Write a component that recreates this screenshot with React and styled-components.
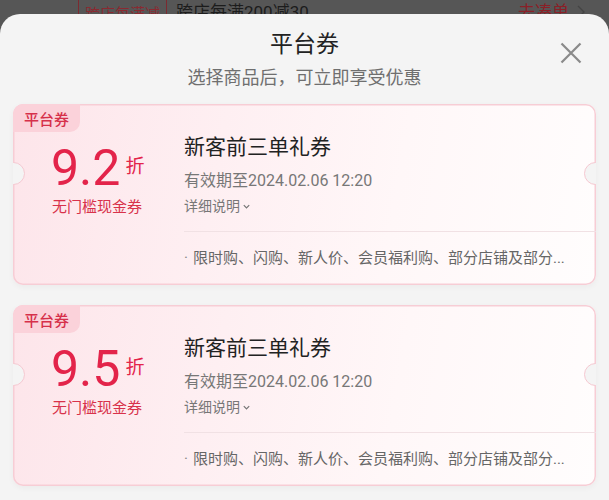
import React from "react";
import styled, { createGlobalStyle } from "styled-components";

const Global = createGlobalStyle`
  html, body { margin: 0; padding: 0; }
  body {
    font-family: Roboto, "Noto Sans CJK SC", sans-serif;
    background: #565656;
  }
`;

const Page = styled.div`
  width: 609px;
  height: 500px;
  overflow: hidden;
  background: #565656;
  display: flex;
  flex-direction: column;
`;

const BehindBar = styled.div`
  height: 14px;
  flex: none;
  overflow: hidden;
  display: flex;
  align-items: flex-start;
  padding: 0 24px 0 78px;
`;

const PromoBadge = styled.span`
  border: 1px solid #7c2a30;
  color: #8a2a31;
  font-size: 15px;
  line-height: 24px;
  padding: 2px 6px 0;
  margin-top: -1px;
`;

const PromoText = styled.span`
  margin-left: 9px;
  color: #1c1c1c;
  font-size: 17px;
  line-height: 22px;
  padding-top: 1px;
`;

const PromoLink = styled.span`
  margin-left: auto;
  color: #8a1f27;
  font-size: 17px;
  line-height: 22px;
  padding-top: 1px;
  display: flex;
  align-items: center;
  gap: 8px;
`;

const Sheet = styled.div`
  flex: 1;
  background: #f4f4f4;
  border-radius: 20px 20px 0 0;
  padding: 0 13px;
  display: flex;
  flex-direction: column;
`;

const Header = styled.div`
  position: relative;
  display: flex;
  flex-direction: column;
  align-items: center;
  padding: 16px 0 14px;
`;

const Title = styled.div`
  font-size: 23px;
  line-height: 30px;
  color: #222;
`;

const Subtitle = styled.div`
  margin-top: 6px;
  font-size: 18px;
  line-height: 24px;
  color: #6f6f6f;
`;

const CloseButton = styled.button`
  position: absolute;
  right: 13px;
  top: 27px;
  width: 24px;
  height: 24px;
  padding: 0;
  border: none;
  background: none;
  display: flex;
  align-items: center;
  justify-content: center;
`;

const List = styled.div`
  display: flex;
  flex-direction: column;
  gap: 20px;
`;

const Card = styled.div`
  position: relative;
  height: 181px;
  border-radius: 10px;
  overflow: hidden;
  display: grid;
  grid-template-columns: 171px 1fr;
  background: linear-gradient(100deg, #fde5ea 0%, #feeff2 35%, #fff7f8 65%, #fffdfd 100%);
  box-shadow: inset 0 0 0 1.5px #f7cdd5, 0 2px 6px rgba(0, 0, 0, 0.04);
`;

const Notch = styled.span`
  position: absolute;
  top: 58px;
  ${(p) => (p.$side === "left" ? "left: -11px;" : "right: -11px;")}
  width: 23px;
  height: 23px;
  box-sizing: border-box;
  border-radius: 50%;
  background: #f4f4f4;
  border: 1.5px solid #f5c8d1;
`;

const Tag = styled.span`
  position: absolute;
  left: 0;
  top: 0;
  width: 67px;
  height: 28px;
  display: flex;
  align-items: center;
  justify-content: center;
  background: #fbd2da;
  color: #d6304a;
  font-size: 15px;
  font-weight: 500;
  border-radius: 10px 0 10px 0;
`;

const Left = styled.div`
  display: flex;
  flex-direction: column;
  padding: 39px 0 0 38px;
`;

const Amount = styled.div`
  display: flex;
  align-items: flex-start;
  color: #e3244a;
`;

const Number = styled.span`
  font-family: Roboto, sans-serif;
  font-size: 50px;
  line-height: 50px;
`;

const Unit = styled.span`
  font-size: 19px;
  line-height: 22px;
  margin: 13px 0 0 5px;
`;

const AmountLabel = styled.div`
  margin-top: 4px;
  margin-left: 1px;
  font-size: 15px;
  line-height: 20px;
  color: #d8324b;
`;

const Right = styled.div`
  display: flex;
  flex-direction: column;
  padding-top: 30px;
  min-width: 0;
`;

const CouponName = styled.div`
  font-size: 21px;
  line-height: 26px;
  color: #222;
`;

const Validity = styled.div`
  margin-top: 11px;
  font-size: 16px;
  line-height: 20px;
  color: #777;
`;

const Details = styled.div`
  margin-top: 5px;
  font-size: 14px;
  line-height: 20px;
  color: #777;
  display: flex;
  align-items: center;
  gap: 2px;
`;

const Divider = styled.div`
  margin-top: 15px;
  height: 1px;
  background: #f1e1e4;
`;

const Rule = styled.div`
  margin-top: 16px;
  padding-right: 14px;
  font-size: 15px;
  line-height: 20px;
  color: #666;
  white-space: nowrap;
  overflow: hidden;
  display: flex;
  gap: 5px;
`;

const Dot = styled.span`
  color: #888;
`;

const Chevron = () => (
  <svg width="9" height="9" viewBox="0 0 10 10">
    <path d="M2 3.5 L5 6.5 L8 3.5" fill="none" stroke="#777" strokeWidth="1.4" />
  </svg>
);

const coupons = [
  { value: "9.2" },
  { value: "9.5" },
];

function Coupon({ value }) {
  return (
    <Card>
      <Tag>平台券</Tag>
      <Notch $side="left" />
      <Notch $side="right" />
      <Left>
        <Amount>
          <Number>{value}</Number>
          <Unit>折</Unit>
        </Amount>
        <AmountLabel>无门槛现金券</AmountLabel>
      </Left>
      <Right>
        <CouponName>新客前三单礼券</CouponName>
        <Validity>有效期至2024.02.06 12:20</Validity>
        <Details>
          详细说明
          <Chevron />
        </Details>
        <Divider />
        <Rule>
          <Dot>·</Dot>
          <span>限时购、闪购、新人价、会员福利购、部分店铺及部分...</span>
        </Rule>
      </Right>
    </Card>
  );
}

export default function App() {
  return (
    <Page>
      <Global />
      <BehindBar>
        <PromoBadge>跨店每满减</PromoBadge>
        <PromoText>跨店每满200减30</PromoText>
        <PromoLink>
          去凑单
          <svg width="8" height="14" viewBox="0 0 8 14">
            <path d="M1 1 L7 7 L1 13" fill="none" stroke="#444" strokeWidth="1.4" />
          </svg>
        </PromoLink>
      </BehindBar>
      <Sheet>
        <Header>
          <Title>平台券</Title>
          <Subtitle>选择商品后，可立即享受优惠</Subtitle>
          <CloseButton aria-label="关闭">
            <svg width="22" height="22" viewBox="0 0 22 22">
              <path d="M1.5 1.5 L20.5 20.5 M20.5 1.5 L1.5 20.5" stroke="#8a8a8a" strokeWidth="2.2" />
            </svg>
          </CloseButton>
        </Header>
        <List>
          {coupons.map((c, i) => (
            <Coupon key={i} value={c.value} />
          ))}
        </List>
      </Sheet>
    </Page>
  );
}
